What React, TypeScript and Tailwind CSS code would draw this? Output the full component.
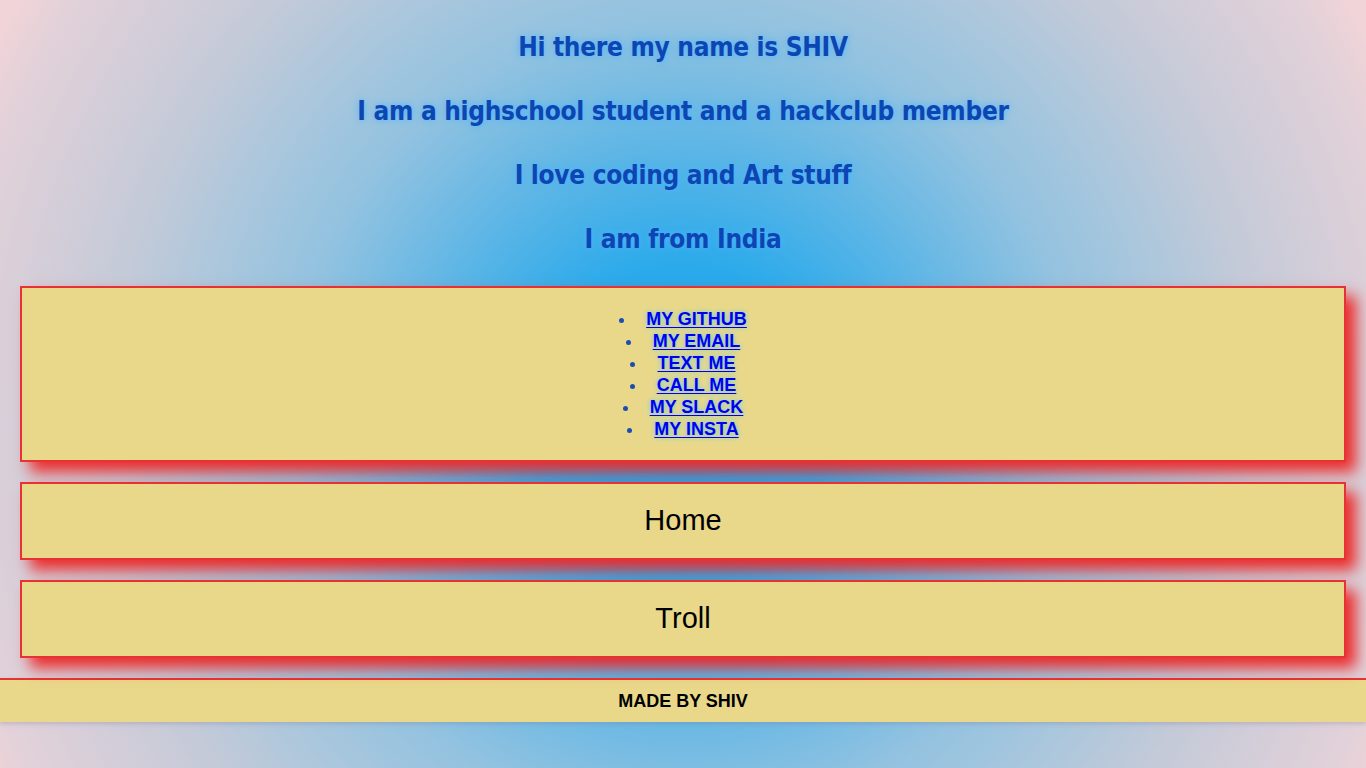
const links = ["MY GITHUB", "MY EMAIL", "TEXT ME", "CALL ME", "MY SLACK", "MY INSTA"]

const lines = [
	"Hi there my name is SHIV",
	"I am a highschool student and a hackclub member",
	"I love coding and Art stuff",
	"I am from India",
]

export default function App() {
	return (
		<div className="min-h-[768px] bg-[#f0d4d8] bg-[radial-gradient(ellipse_780px_800px_at_50%_420px,#18a6ee_0%,#2aaaeb_19%,#78bce3_42%,#92c2e0_50%,#a6c6dd_60%,#c4cad8_74%,#e2d1d9_94%,#f0d4d8_100%)] font-['Liberation_Sans',Arial,sans-serif]">
			{/* intro */}
			<div className="flex flex-col items-center gap-8 pt-[31px] pb-[31px]">
				{lines.map((l) => (
					<h2
						key={l}
						className="text-[26px] leading-8 font-bold tracking-[-0.3px] text-[#0d45b3] [text-shadow:0_0_7px_#4ab4ff] font-['Liberation_Sans_Narrow','DejaVu_Sans_Condensed','Liberation_Sans',sans-serif] [font-stretch:condensed]"
					>
						{l}
					</h2>
				))}
			</div>

			<div className="flex flex-col gap-5 px-5">
				<div className="h-[176px] border-2 border-[#e63232] bg-[#e9d88a] pt-[20px] shadow-[10px_10px_14px_#ec2c2c]">
					<ul className="list-disc list-inside text-center text-[18px] leading-[22px] font-bold text-[#1a4fb0]">
						{links.map((t) => (
							<li key={t}>
								<a
									href="#"
									className="ml-[3px] text-[#0000ee] underline underline-offset-2 [text-shadow:0_0_5px_#5ec8ff]"
								>
									{t}
								</a>
							</li>
						))}
					</ul>
				</div>

				<div className="flex h-[78px] items-center justify-center border-2 border-[#e63232] bg-[#e9d88a] text-[29px] text-black shadow-[10px_10px_14px_#ec2c2c]">
					Home
				</div>
				<div className="flex h-[78px] items-center justify-center border-2 border-[#e63232] bg-[#e9d88a] text-[29px] text-black shadow-[10px_10px_14px_#ec2c2c]">
					Troll
				</div>
			</div>

			<footer className="mt-5 flex h-[44px] items-center justify-center border-t-2 border-[#e63232] bg-[#e9d88a] text-[18px] font-bold text-black shadow-[0_2px_4px_rgba(120,120,160,0.3)]">
				MADE BY SHIV
			</footer>
		</div>
	)
}
